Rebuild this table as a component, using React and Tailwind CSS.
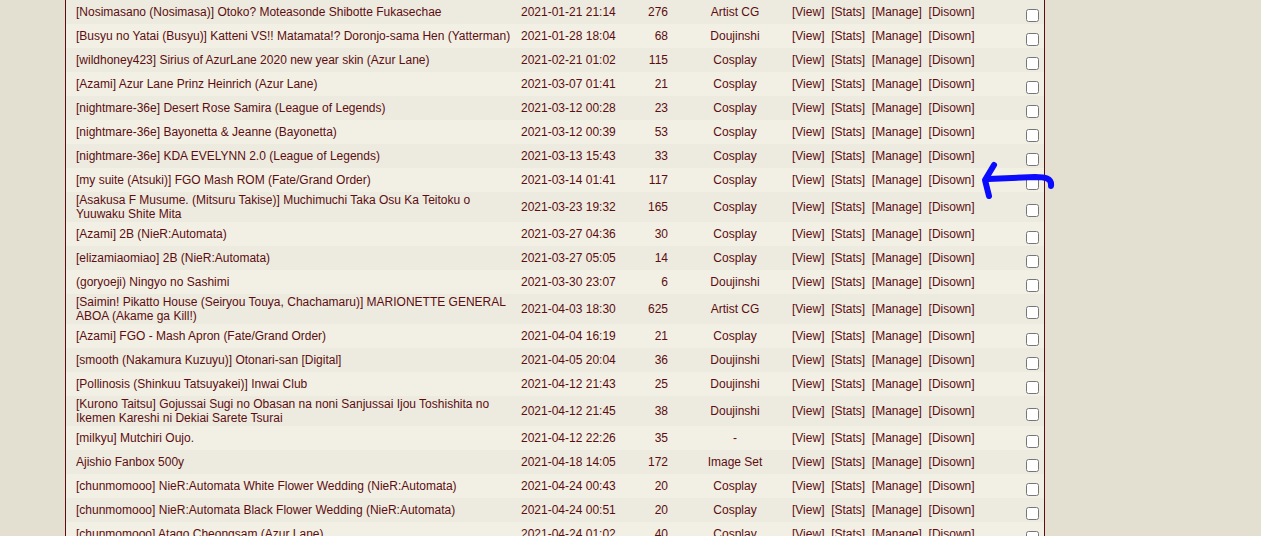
import React from 'react';

const rows = [
  ['[Nosimasano (Nosimasa)] Otoko? Moteasonde Shibotte Fukasechae', '2021-01-21 21:14', '276', 'Artist CG'],
  ['[Busyu no Yatai (Busyu)] Katteni VS!! Matamata!? Doronjo-sama Hen (Yatterman)', '2021-01-28 18:04', '68', 'Doujinshi'],
  ['[wildhoney423] Sirius of AzurLane 2020 new year skin (Azur Lane)', '2021-02-21 01:02', '115', 'Cosplay'],
  ['[Azami] Azur Lane Prinz Heinrich (Azur Lane)', '2021-03-07 01:41', '21', 'Cosplay'],
  ['[nightmare-36e] Desert Rose Samira (League of Legends)', '2021-03-12 00:28', '23', 'Cosplay'],
  ['[nightmare-36e] Bayonetta & Jeanne (Bayonetta)', '2021-03-12 00:39', '53', 'Cosplay'],
  ['[nightmare-36e] KDA EVELYNN 2.0 (League of Legends)', '2021-03-13 15:43', '33', 'Cosplay'],
  ['[my suite (Atsuki)] FGO Mash ROM (Fate/Grand Order)', '2021-03-14 01:41', '117', 'Cosplay'],
  ['[Asakusa F Musume. (Mitsuru Takise)] Muchimuchi Taka Osu Ka Teitoku o Yuuwaku Shite Mita', '2021-03-23 19:32', '165', 'Cosplay'],
  ['[Azami] 2B (NieR:Automata)', '2021-03-27 04:36', '30', 'Cosplay'],
  ['[elizamiaomiao] 2B (NieR:Automata)', '2021-03-27 05:05', '14', 'Cosplay'],
  ['(goryoeji) Ningyo no Sashimi', '2021-03-30 23:07', '6', 'Doujinshi'],
  ['[Saimin! Pikatto House (Seiryou Touya, Chachamaru)] MARIONETTE GENERAL ABOA (Akame ga Kill!)', '2021-04-03 18:30', '625', 'Artist CG'],
  ['[Azami] FGO - Mash Apron (Fate/Grand Order)', '2021-04-04 16:19', '21', 'Cosplay'],
  ['[smooth (Nakamura Kuzuyu)] Otonari-san [Digital]', '2021-04-05 20:04', '36', 'Doujinshi'],
  ['[Pollinosis (Shinkuu Tatsuyakei)] Inwai Club', '2021-04-12 21:43', '25', 'Doujinshi'],
  ['[Kurono Taitsu] Gojussai Sugi no Obasan na noni Sanjussai Ijou Toshishita no Ikemen Kareshi ni Dekiai Sarete Tsurai', '2021-04-12 21:45', '38', 'Doujinshi'],
  ['[milkyu] Mutchiri Oujo.', '2021-04-12 22:26', '35', '-'],
  ['Ajishio Fanbox 500y', '2021-04-18 14:05', '172', 'Image Set'],
  ['[chunmomooo] NieR:Automata White Flower Wedding (NieR:Automata)', '2021-04-24 00:43', '20', 'Cosplay'],
  ['[chunmomooo] NieR:Automata Black Flower Wedding (NieR:Automata)', '2021-04-24 00:51', '20', 'Cosplay'],
  ['[chunmomooo] Atago Cheongsam (Azur Lane)', '2021-04-24 01:02', '40', 'Cosplay'],
];

function Row({ title, date, count, category, odd }) {
  return (
    <div className={`flex items-center min-h-[24px] py-[1px] ${odd ? 'bg-[#f2f0e4]' : 'bg-[#edebdf]'}`}>
      <div className="w-[455px] pl-[10px] pr-[5px]">
        <a className="text-[#5c0d11]">{title}</a>
      </div>
      <div className="w-[110px]">{date}</div>
      <div className="w-[37px] text-right">{count}</div>
      <div className="w-[114px] ml-[10px] text-center">{category}</div>
      <div className="whitespace-pre">
        <a>[View]</a>{'\u00a0 '}<a>[Stats]</a>{'\u00a0 '}<a>[Manage]</a>{'\u00a0 '}<a>[Disown]</a>
      </div>
      <div className="ml-auto mr-[5px] flex items-center">
        <input type="checkbox" className="w-[13px] h-[13px] m-0 mt-[6px]" />
      </div>
    </div>
  );
}

export default function App() {
  return (
    <div
      className="relative h-[536px] overflow-hidden bg-[#e3e0d1] text-[12px] leading-[14px] text-[#5c0d11]"
      style={{ fontFamily: '"Liberation Sans", Arial, sans-serif' }}
    >
      <div className="ml-[65px] w-[980px] border-x border-[#5c0d12] bg-[#edebdf]">
        {rows.map((r, i) => (
          <Row key={i} title={r[0]} date={r[1]} count={r[2]} category={r[3]} odd={i % 2 === 1} />
        ))}
      </div>
      <svg
        className="absolute left-[975px] top-[160px]"
        width="85"
        height="45"
        viewBox="0 0 85 45"
        fill="none"
        stroke="#0a0aff"
        strokeWidth="6"
        strokeLinecap="round"
        strokeLinejoin="round"
      >
        <path d="M76 26 C77 18 70 17 60 17 L13 19" />
        <path d="M19 5 L10 20 L14 36" />
      </svg>
    </div>
  );
}
